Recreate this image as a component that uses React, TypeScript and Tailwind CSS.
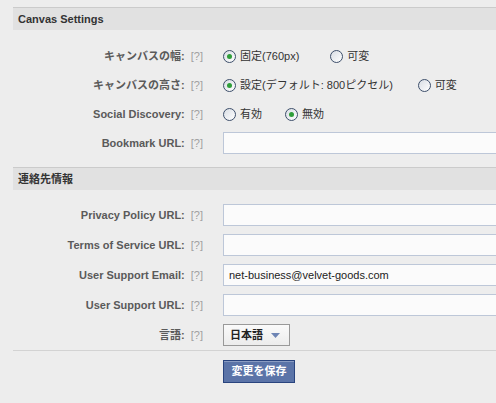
import React from 'react';

const font = { fontFamily: '"Liberation Sans", "Noto Sans CJK JP", sans-serif' };

function Radio({ checked }: { checked?: boolean }) {
  return (
    <span className="relative inline-flex h-[13px] w-[13px] shrink-0 items-center justify-center rounded-full border border-[#3d4f6b] bg-gradient-to-br from-[#d8dde4] to-white">
      {checked && <span className="h-[5px] w-[5px] rounded-full bg-[#2f9e3a]" />}
    </span>
  );
}

function Option({ label, checked, gap = 'mr-[20px]' }: { label: string; checked?: boolean; gap?: string }) {
  return (
    <label className={`flex items-center gap-[4px] text-[11px] text-[#333] ${gap}`}>
      <Radio checked={checked} />
      <span>{label}</span>
    </label>
  );
}

function Row({ label, h, children }: { label: string; h: string; children: React.ReactNode }) {
  return (
    <div className={`flex items-center ${h}`}>
      <div className="flex w-[190px] shrink-0 justify-end gap-[6px] text-[11px]">
        <span className="font-bold text-[#5a5a5a]">{label}</span>
        <span className="text-[#a0a0a0]">[?]</span>
      </div>
      <div className="ml-[20px] flex flex-1 items-center overflow-hidden">{children}</div>
    </div>
  );
}

function TextInput({ value }: { value?: string }) {
  return (
    <div className="flex h-[22px] w-[300px] shrink-0 items-center border border-[#bdc7d8] bg-[#fbfbfb] pl-[5px] text-[11px] text-[#222]">
      {value}
    </div>
  );
}

function Header({ title }: { title: string }) {
  return (
    <div className="flex h-[23px] items-center border-t border-[#cbcbcb] bg-[#e1e1e1] px-[5px] text-[11px] font-bold text-[#333]">
      {title}
    </div>
  );
}

export default function App() {
  return (
    <div className="h-[403px] w-full overflow-hidden bg-[#ededed] pl-[13px] pt-[7px]" style={font}>
      <Header title="Canvas Settings" />
      <div className="mb-[10px] mt-[12px] flex flex-col gap-[1px]">
        <Row label="キャンバスの幅:" h="h-[28px]">
          <Option label="固定(760px)" checked gap="mr-[31px]" />
          <Option label="可変" />
        </Row>
        <Row label="キャンバスの高さ:" h="h-[28px]">
          <Option label="設定(デフォルト: 800ピクセル)" checked gap="mr-[25px]" />
          <Option label="可変" />
        </Row>
        <Row label="Social Discovery:" h="h-[28px]">
          <Option label="有効" gap="mr-[23px]" />
          <Option label="無効" checked />
        </Row>
        <Row label="Bookmark URL:" h="h-[28px]">
          <TextInput />
        </Row>
      </div>

      <Header title="連絡先情報" />
      <div className="mt-[10px] flex flex-col">
        <Row label="Privacy Policy URL:" h="h-[30px]">
          <TextInput />
        </Row>
        <Row label="Terms of Service URL:" h="h-[30px]">
          <TextInput />
        </Row>
        <Row label="User Support Email:" h="h-[30px]">
          <TextInput value="net-business@velvet-goods.com" />
        </Row>
        <Row label="User Support URL:" h="h-[30px]">
          <TextInput />
        </Row>
        <Row label="言語:" h="h-[30px]">
          <button className="flex h-[22px] w-[67px] items-center gap-[8px] border border-[#999] bg-gradient-to-b from-[#fafafa] to-[#ececec] pl-[6px] text-[11px] font-bold text-[#222]">
            日本語
            <svg width="9" height="5" viewBox="0 0 9 5">
              <path d="M0 0h9L4.5 5z" fill="#6d84b4" />
            </svg>
          </button>
        </Row>
      </div>
      <div className="h-px bg-[#d3d3d3]" />
      <div className="ml-[210px] mt-[9px]">
        <button className="flex h-[23px] w-[72px] items-center justify-center border border-[#29447e] bg-[#5b74a8] text-[11px] font-bold text-white shadow-[inset_0_1px_0_#8a9cc2]">
          変更を保存
        </button>
      </div>
    </div>
  );
}
